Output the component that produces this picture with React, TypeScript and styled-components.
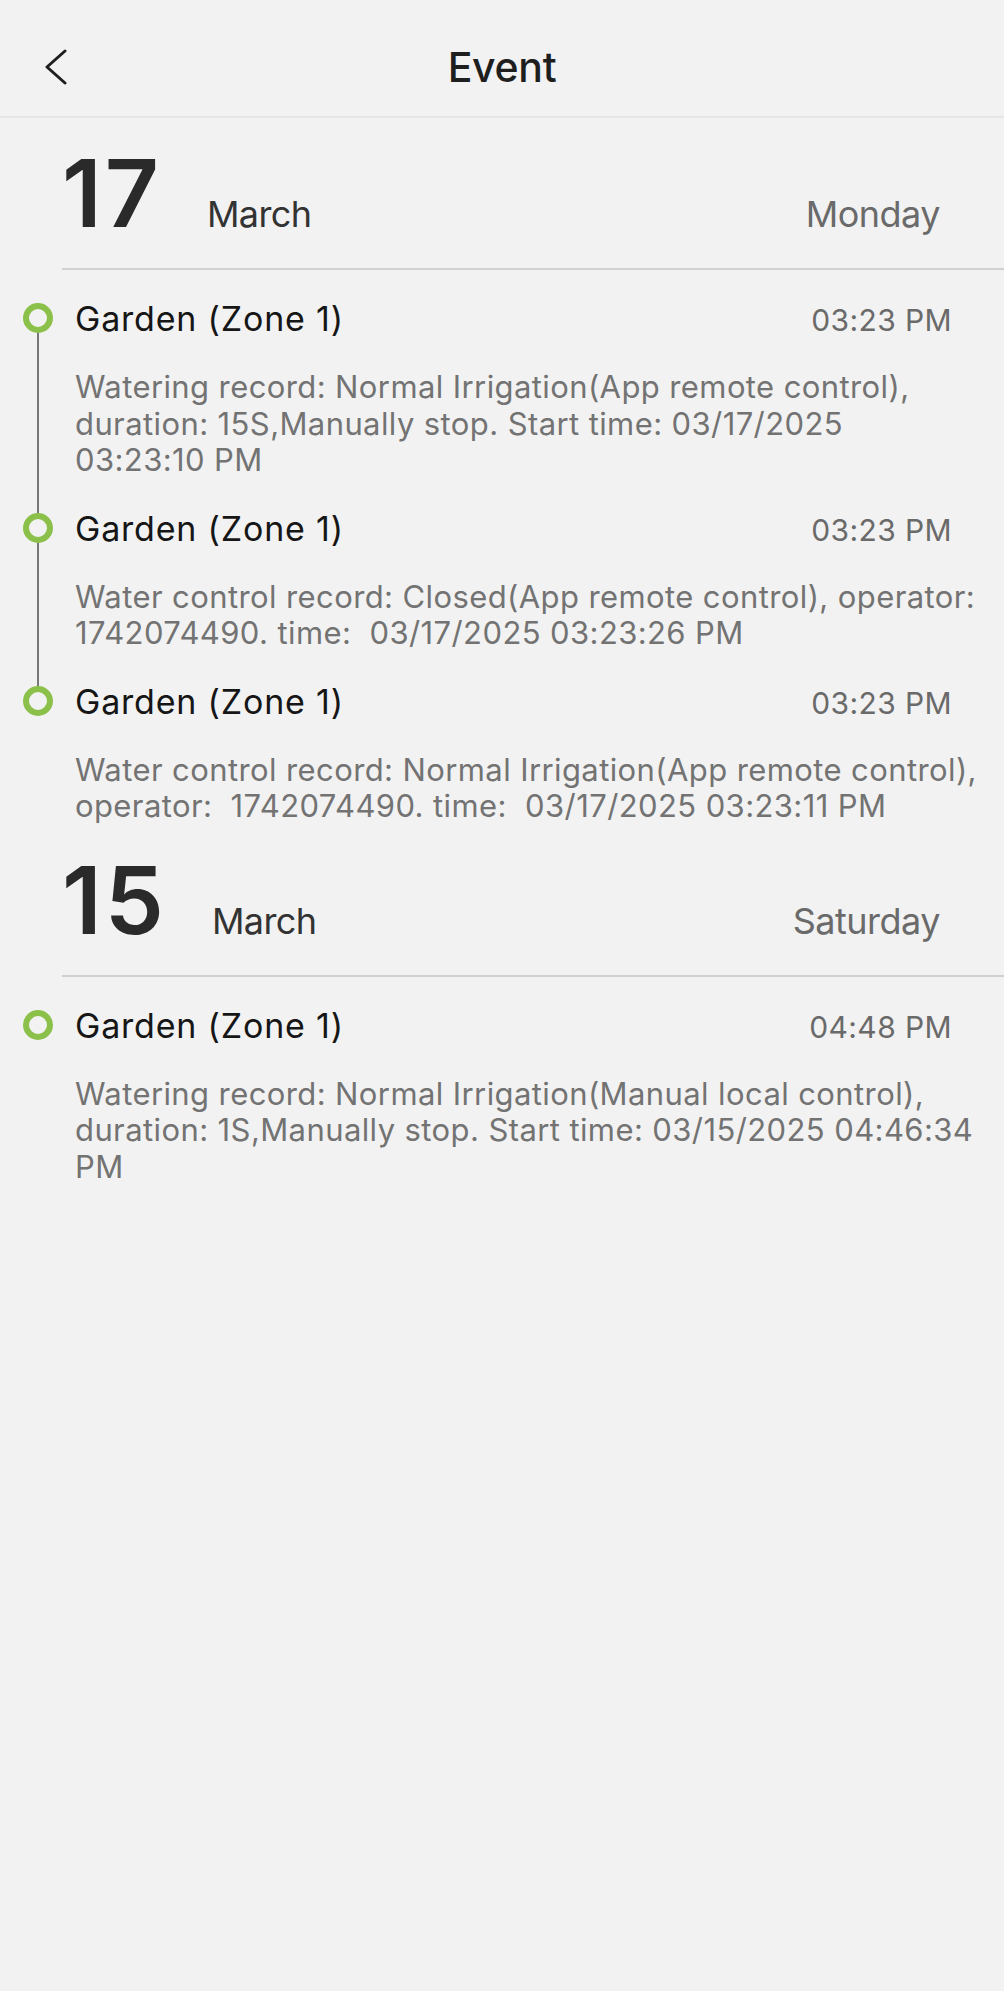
import React from "react";
import styled, { createGlobalStyle } from "styled-components";

const GlobalStyle = createGlobalStyle`
  html, body {
    margin: 0;
    padding: 0;
    background: #f2f2f2;
  }
  body {
    font-family: Inter, "Noto Sans", "Liberation Sans", sans-serif;
    -webkit-font-smoothing: antialiased;
  }
`;

const Page = styled.div`
  min-height: 1991px;
  background: #f2f2f2;
`;

const Header = styled.header`
  display: grid;
  grid-template-columns: 1fr auto 1fr;
  align-items: start;
  height: 118px;
  box-sizing: border-box;
  padding-top: 42px;
  border-bottom: 2px solid #e6e6e6;
`;

const BackButton = styled.button`
  justify-self: start;
  margin: 7px 0 0 42px;
  padding: 0;
  border: 0;
  background: transparent;
  width: 28px;
  height: 36px;
  display: flex;
  align-items: center;
  justify-content: center;
  cursor: pointer;
`;

const Title = styled.h1`
  margin: 0;
  font-size: 41px;
  line-height: 50px;
  font-weight: 500;
  color: #1e1e1e;
  letter-spacing: -0.3px;
`;

const DayGroup = styled.section`
  padding-top: 25px;
`;

const DateRow = styled.div`
  display: flex;
  align-items: baseline;
  margin-left: 62px;
  padding: 0 64px 25px 0;
  border-bottom: 2px solid #d0d0d0;
`;

const DayNum = styled.span`
  font-size: 94px;
  line-height: 100px;
  font-weight: 600;
  color: #2a2a2a;
  letter-spacing: 3px;
`;

const Month = styled.span`
  margin-left: 45px;
  font-size: 36px;
  line-height: 40px;
  color: #333333;
  letter-spacing: -0.6px;
`;

const Weekday = styled.span`
  margin-left: auto;
  font-size: 36px;
  line-height: 40px;
  color: #6a6a6a;
  letter-spacing: -0.5px;
`;

const EventList = styled.ul`
  list-style: none;
  margin: 0;
  padding: 29px 0 0 0;
`;

const EventItem = styled.li<{ $hasNext: boolean; $last: boolean }>`
  position: relative;
  display: grid;
  grid-template-columns: 75px 1fr;
  padding-bottom: ${(p) => (p.$last ? "0" : "30px")};

  &::before {
    content: "";
    display: ${(p) => (p.$hasNext ? "block" : "none")};
    position: absolute;
    left: 37px;
    width: 2px;
    top: 19px;
    bottom: -19px;
    background: #787878;
  }
`;

const Marker = styled.span`
  position: relative;
  z-index: 1;
  box-sizing: border-box;
  width: 30px;
  height: 30px;
  margin: 4px 0 0 23px;
  border-radius: 50%;
  border: 6px solid #8bc04a;
  background: #f2f2f2;
`;

const EventBody = styled.div`
  display: flex;
  flex-direction: column;
  padding-right: 24px;
`;

const EventHead = styled.div`
  display: flex;
  align-items: baseline;
  justify-content: space-between;
  padding-right: 28px;
`;

const EventName = styled.span`
  font-size: 34px;
  line-height: 40px;
  color: #161616;
  letter-spacing: 0.8px;
`;

const EventTime = styled.span`
  font-size: 30px;
  line-height: 40px;
  color: #6a6a6a;
  letter-spacing: 0.4px;
`;

const EventText = styled.p`
  margin: 29px 0 0 0;
  font-size: 31px;
  line-height: 36.5px;
  color: #737373;
  letter-spacing: 0.4px;
  white-space: pre-wrap;
`;

type EventData = { name: string; time: string; text: string };
type DayData = { day: string; month: string; weekday: string; events: EventData[] };

const days: DayData[] = [
  {
    day: "17",
    month: "March",
    weekday: "Monday",
    events: [
      {
        name: "Garden (Zone 1)",
        time: "03:23 PM",
        text: "Watering record: Normal Irrigation(App remote control), duration: 15S,Manually stop. Start time: 03/17/2025 03:23:10 PM",
      },
      {
        name: "Garden (Zone 1)",
        time: "03:23 PM",
        text: "Water control record: Closed(App remote control), operator: 1742074490. time:  03/17/2025 03:23:26 PM",
      },
      {
        name: "Garden (Zone 1)",
        time: "03:23 PM",
        text: "Water control record: Normal Irrigation(App remote control), operator:  1742074490. time:  03/17/2025 03:23:11 PM",
      },
    ],
  },
  {
    day: "15",
    month: "March",
    weekday: "Saturday",
    events: [
      {
        name: "Garden (Zone 1)",
        time: "04:48 PM",
        text: "Watering record: Normal Irrigation(Manual local control), duration: 1S,Manually stop. Start time: 03/15/2025 04:46:34 PM",
      },
    ],
  },
];

export default function App() {
  return (
    <Page>
      <GlobalStyle />
      <Header>
        <BackButton aria-label="Back">
          <svg width="24" height="36" viewBox="0 0 24 36" fill="none">
            <polyline
              points="21,2 3,18 21,34"
              stroke="#1e1e1e"
              strokeWidth="3"
              strokeLinecap="round"
              strokeLinejoin="round"
            />
          </svg>
        </BackButton>
        <Title>Event</Title>
        <span />
      </Header>
      {days.map((d) => (
        <DayGroup key={d.day}>
          <DateRow>
            <DayNum>{d.day}</DayNum>
            <Month>{d.month}</Month>
            <Weekday>{d.weekday}</Weekday>
          </DateRow>
          <EventList>
            {d.events.map((e, i) => (
              <EventItem
                key={i}
                $hasNext={i < d.events.length - 1}
                $last={i === d.events.length - 1}
              >
                <Marker />
                <EventBody>
                  <EventHead>
                    <EventName>{e.name}</EventName>
                    <EventTime>{e.time}</EventTime>
                  </EventHead>
                  <EventText>{e.text}</EventText>
                </EventBody>
              </EventItem>
            ))}
          </EventList>
        </DayGroup>
      ))}
    </Page>
  );
}
